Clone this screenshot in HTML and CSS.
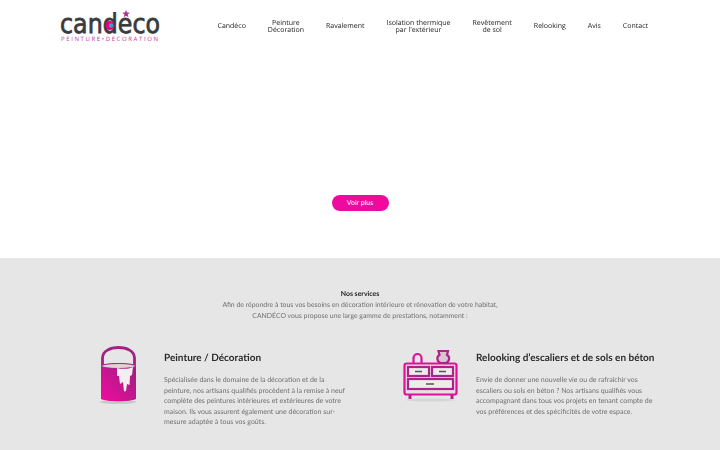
FILE: index.html
```html
<!DOCTYPE html>
<html lang="fr">
<head>
  <meta charset="UTF-8"/>
  <title>Candéco - Peinture et décoration</title>
  <link rel="stylesheet" href="styles.css">
</head>
<body>
  <header class="header">
    <a class="logo" href="#">
      <svg class="logo-img" width="102" height="36" viewBox="0 0 102 36">
        <text class="logo-name" x="1" y="22.500" textLength="100" lengthAdjust="spacingAndGlyphs">candeco</text>
        <circle cx="51" cy="15.500" r="4.500" fill="#e6007e"/>
        <circle cx="52" cy="15.500" r="2.200" fill="#2aa7c9"/>
        <path d="M67 0 l1.100 2.600 2.700 .1 -2.100 1.800 .8 2.700 -2.500 -1.500 -2.300 1.500 .7 -2.700 -2.100 -1.800 2.700 -.1z" fill="#a9348f"/>
        <text class="logo-sub" x="2" y="31" textLength="97">PEINTURE&#8226;DECORATION</text>
      </svg>
    </a>
    <nav class="nav">
      <a href="#">Candéco</a>
      <a href="#">Peinture<br>Décoration</a>
      <a href="#">Ravalement</a>
      <a href="#">Isolation thermique<br>par l'extérieur</a>
      <a href="#">Revêtement<br>de sol</a>
      <a href="#">Relooking</a>
      <a href="#">Avis</a>
      <a href="#">Contact</a>
    </nav>
  </header>

  <section class="hero">
    <a class="btn" href="#">Voir plus</a>
  </section>

  <section class="services">
    <div class="intro">
      <strong>Nos services</strong><br>
      Afin de répondre à tous vos besoins en décoration intérieure et rénovation de votre habitat,<br>
      CANDÉCO vous propose une large gamme de prestations, notamment :
    </div>
    <div class="cards">
      <article class="card">
        <div class="card-icon">
          <!-- paint bucket -->
          <svg width="42" height="62" viewBox="0 0 42 62">
            <defs>
              <linearGradient id="bucket" x1="1" y1="0" x2="0" y2="1">
                <stop offset="0" stop-color="#98207c"/>
                <stop offset="1" stop-color="#f00ca0"/>
              </linearGradient>
            </defs>
            <ellipse cx="21" cy="58" rx="18" ry="2" fill="#c9c9c9"/>
            <path d="M5.500 22 V14 C5.500 0 37.500 0 37.500 14 V22" fill="none" stroke="#a52181" stroke-width="2.800"/>
            <path d="M4 21 C9 19 34 19 39 21 V55 C34 58 9 58 4 55z" fill="url(#bucket)"/>
            <ellipse cx="21.500" cy="22" rx="17" ry="2.500" fill="#ddd5da" stroke="#a52181"/>
            <path d="M20 24 C25 25.500 32 25 36 23 L35 31 33 32 32.500 41 30 40 29 47 27 47.500 26 38 23 40 22 32 20 32z" fill="#f4eef2"/>
          </svg>
        </div>
        <div class="card-body">
          <h2>Peinture / Décoration</h2>
          <p>Spécialisée dans le domaine de la décoration et de la peinture, nos artisans qualifiés procèdent à la remise à neuf complète des peintures intérieures et extérieures de votre maison. Ils vous assurent également une décoration sur-mesure adaptée à tous vos goûts.</p>
        </div>
      </article>
      <article class="card">
        <div class="card-icon">
          <!-- chest of drawers -->
          <svg width="56" height="60" viewBox="0 0 56 60" fill="none" stroke="#ad2388" stroke-width="2.200">
            <ellipse cx="27.500" cy="56" rx="25" ry="1.500" fill="#d6d6d6" stroke="none"/>
            <rect x="1.500" y="19.500" width="52" height="31" rx="2" stroke="#e0109a" fill="#e9dde6"/>
            <rect x="5" y="23" width="21" height="9" fill="#ececec"/>
            <rect x="29" y="23" width="21" height="9" fill="#ececec"/>
            <rect x="5" y="35" width="45" height="10" fill="#ececec"/>
            <path d="M12 27.500 h7 M36 27.500 h7 M23 40 h8" stroke="#555" stroke-width="1.500"/>
            <path d="M7 51 v4 M49 51 v4" stroke-width="3"/>
            <path d="M10.500 19 V14 a4 4 0 0 1 8 0 V19" stroke="#e0109a"/>
            <path d="M35.500 7 h9.500 l-1 4 c3 1.500 3 6 -1 8 h-5.500 c-4 -2 -4 -6.500 -1 -8z" fill="#d8c5d2"/>
          </svg>
        </div>
        <div class="card-body">
          <h2>Relooking d’escaliers et de sols en béton</h2>
          <p>Envie de donner une nouvelle vie ou de rafraîchir vos escaliers ou sols en béton ? Nos artisans qualifiés vous accompagnant dans tous vos projets en tenant compte de vos préférences et des spécificités de votre espace.</p>
        </div>
      </article>
    </div>
  </section>
</body>
</html>
```

FILE: styles.css
```css
html, body {
  margin: 0;
  height: 450px;
  overflow: hidden;
}
body {
  font-family: "Lato", sans-serif;
  background: #fff;
  color: #707070;
  text-rendering: geometricPrecision;
}
a {
  color: inherit;
  text-decoration: none;
}

.header {
  display: flex;
  align-items: center;
  justify-content: space-between;
  height: 52px;
  padding: 0 72px 0 59px;
}
.logo {
  display: block;
  height: 36px;
  margin-top: 4px;
}
.logo-img {
  overflow: visible;
}
.logo-name {
  font-family: "DejaVu Sans", sans-serif;
  font-size: 27px;
  fill: #3a3a3c;
  stroke: #3a3a3c;
  stroke-width: 0.8px;
}
.logo-sub {
  font-family: "Open Sans", sans-serif;
  font-size: 6px;
  fill: #c0369c;
}
.nav {
  display: flex;
  gap: 22px;
  align-items: center;
  margin-top: 2px;
  font-family: "Open Sans", sans-serif;
  font-size: 7px;
  line-height: 7.300px;
  text-align: center;
  color: #222;
  will-change: opacity;
}

.hero {
  display: flex;
  justify-content: center;
  align-items: flex-start;
  height: 206px;
  box-sizing: border-box;
  padding-top: 143px;
}
.btn {
  width: 57px;
  height: 16px;
  line-height: 16px;
  border-radius: 8px;
  background: #ee0a9f;
  color: #fff;
  font-size: 7px;
  text-align: center;
}

.services {
  height: 192px;
  box-sizing: border-box;
  padding-top: 31px;
  background: #e6e6e6;
}
.intro {
  font-size: 6.900px;
  line-height: 11px;
  text-align: center;
  will-change: opacity;
}
.intro strong {
  color: #222;
  font-weight: 700;
}
.cards {
  display: flex;
  margin-top: 22px;
  padding-left: 97px;
}
.card {
  display: flex;
  width: 306px;
}
.card-icon {
  width: 67px;
}
.card-body {
  width: 182px;
  will-change: opacity;
}
.card:last-child .card-icon {
  width: 73px;
  box-sizing: border-box;
}
.card h2 {
  margin: 7px 0 10px;
  font-size: 10px;
  line-height: 14px;
  font-weight: 700;
  color: #2b2b2b;
  white-space: nowrap;
}
.card p {
  margin: 0;
  font-size: 7px;
  line-height: 10.600px;
}
```
